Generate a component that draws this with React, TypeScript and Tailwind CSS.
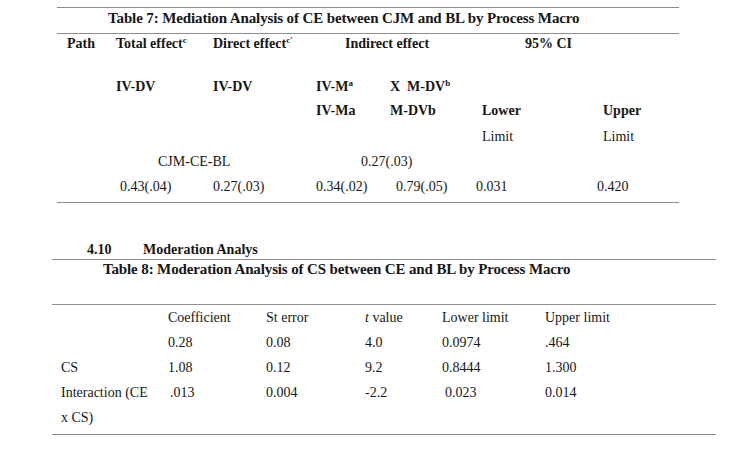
const serif = "font-['Liberation_Serif','Times_New_Roman',serif]";

function Sup({ children }: { children: React.ReactNode }) {
  return <span className="relative -top-[5px] text-[9px] leading-none">{children}</span>;
}

export default function App() {
  const row7 = 'grid grid-cols-[53px_97px_103px_74px_86px_127px_82px] h-[25px] items-center';
  const row8 = 'grid grid-cols-[113px_97px_98px_78px_102px_176px] h-[25px] items-center';

  return (
    <div className={`${serif} min-h-screen w-[736px] bg-white text-[14px] text-[#161616] pt-[7px]`}>
      {/* Table 7 */}
      <div className="ml-[57px] w-[622px]">
        <div className="border-t border-[#8f8f8f] h-[26px] flex items-center pl-[51px] pb-[4px] text-[15px] font-bold tracking-[-0.12px]">
          Table 7: Mediation Analysis of CE between CJM and BL by Process Macro
        </div>
        <div className="border-t border-[#8f8f8f]">
          <div className={`${row7} h-[18px] pb-[5px] leading-none font-bold`}>
            <div className="pl-[10px]">Path</div>
            <div className="pl-[6px]">
              Total effect<Sup>c</Sup>
            </div>
            <div className="pl-[6px]">
              Direct effect<Sup>c′</Sup>
            </div>
            <div className="col-span-2 pl-[35px]">Indirect effect</div>
            <div className="col-span-2 pl-[55px]">95% CI</div>
          </div>
          <div className={`${row7} mt-[15px] font-bold`}>
            <div />
            <div className="pl-[6px]">IV-DV</div>
            <div className="pl-[6px]">IV-DV</div>
            <div className="pl-[6px]">
              IV-M<Sup>a</Sup>
            </div>
            <div className="pl-[6px]">
              X&nbsp; M-DV<Sup>b</Sup>
            </div>
          </div>
          <div className={`${row7} pb-[2px]`}>
            <div />
            <div />
            <div />
            <div className="pl-[6px] font-bold">IV-Ma</div>
            <div className="pl-[6px] font-bold">M-DVb</div>
            <div className="pl-[12px] font-bold">Lower</div>
            <div className="pl-[6px] font-bold">Upper</div>
          </div>
          <div className={row7}>
            <div className="col-start-6 pl-[12px]">Limit</div>
            <div className="pl-[6px]">Limit</div>
          </div>
          <div className={row7}>
            <div />
            <div className="col-span-2 pl-[48px]">CJM-CE-BL</div>
            <div className="col-span-2 pl-[51px]">0.27(.03)</div>
          </div>
          <div className={row7}>
            <div />
            <div className="pl-[10px]">0.43(.04)</div>
            <div className="pl-[6px]">0.27(.03)</div>
            <div className="pl-[6px]">0.34(.02)</div>
            <div className="pl-[12px]">0.79(.05)</div>
            <div className="pl-[6px]">0.031</div>
            <div>0.420</div>
          </div>
        </div>
        <div className="border-b border-[#8f8f8f] h-[4px]" />
      </div>

      {/* Table 8 */}
      <div className="ml-[52px] w-[664px] mt-[36px]">
        <div className="h-[20px] flex items-center pl-[35px] font-bold">
          <span className="w-[56px]">4.10</span>
          <span>Moderation Analys</span>
        </div>
        <div className="border-t border-[#8f8f8f] h-[20px] flex items-center pl-[51px] text-[15px] font-bold tracking-[-0.13px]">
          Table 8: Moderation Analysis of CS between CE and BL by Process Macro
        </div>
        <div className="h-[25px]" />
        <div className="border-t border-[#8f8f8f]">
          <div className={`${row8} h-[19px]`}>
            <div />
            <div className="pl-[3px]">Coefficient</div>
            <div className="pl-[4px]">St error</div>
            <div className="pl-[5px]">
              <i>t</i> value
            </div>
            <div className="pl-[4px]">Lower limit</div>
            <div className="pl-[5px]">Upper limit</div>
          </div>
          <div className={row8}>
            <div />
            <div className="pl-[3px]">0.28</div>
            <div className="pl-[4px]">0.08</div>
            <div className="pl-[5px]">4.0</div>
            <div className="pl-[4px]">0.0974</div>
            <div className="pl-[5px]">.464</div>
          </div>
          <div className={row8}>
            <div className="pl-[9px]">CS</div>
            <div className="pl-[3px]">1.08</div>
            <div className="pl-[4px]">0.12</div>
            <div className="pl-[5px]">9.2</div>
            <div className="pl-[4px]">0.8444</div>
            <div className="pl-[5px]">1.300</div>
          </div>
          <div className={`${row8} h-[50px] items-start leading-[25px]`}>
            <div className="pl-[9px]">
              Interaction (CE
              <br />x CS)
            </div>
            <div className="pl-[5px]">.013</div>
            <div className="pl-[4px]">0.004</div>
            <div className="pl-[5px]">-2.2</div>
            <div className="pl-[7px]">0.023</div>
            <div className="pl-[5px]">0.014</div>
          </div>
        </div>
        <div className="border-b border-[#8f8f8f] h-[5px]" />
      </div>
    </div>
  );
}
